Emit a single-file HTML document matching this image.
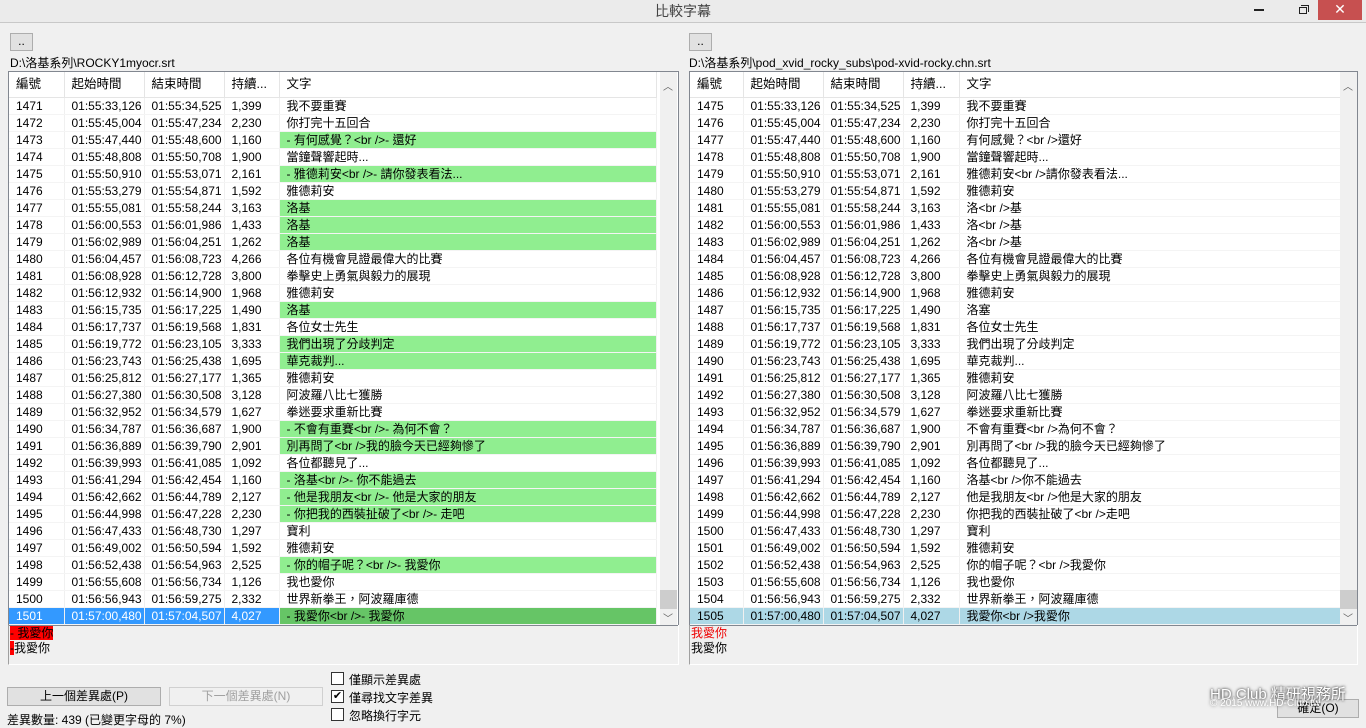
<!DOCTYPE html>
<html><head><meta charset="utf-8"><style>
*{margin:0;padding:0;box-sizing:border-box}
body{width:1366px;height:728px;background:#f0f0f0;font-family:"Liberation Sans","Noto Sans CJK TC",sans-serif;font-size:12px;color:#000;position:relative;overflow:hidden}
.abs{position:absolute}
.title{left:0;top:0;width:1366px;height:23px;background:#ebebeb;border-bottom:1px solid #c8c8c8;text-align:center;font-size:14px;line-height:22px;color:#444}
.close{left:1318px;top:0;width:44px;height:20px;background:#c75050;color:#fff;text-align:center;line-height:19px;font-size:14px}
.btn{background:#e1e1e1;border:1px solid #adadad;text-align:center}
.list{border:1px solid #828790;background:#fff;overflow:hidden}
table{border-collapse:collapse;table-layout:fixed;position:absolute;left:0;top:0}
td{height:17px;line-height:16px;padding-left:7px;white-space:nowrap;overflow:hidden;border-right:1px solid #f0f0f0;border-bottom:1px solid #f4f4f4}
tr.h td{height:25px;line-height:24px;border-right:1px solid #e5e5e5;border-bottom:1px solid #e5e5e5;font-size:12.5px}
td.g{background:#90ee90}
tr.sl td{background:#3399ff;color:#fff}
tr.sl td.g{background:#66c566;color:#000}
tr.sr td{background:#add8e6}
.sb{background:#f0f0f0;width:17px}
.cb{width:13px;height:13px;border:1px solid #333;background:#fff}
</style></head><body>
<div class="abs title">比較字幕</div>
<div class="abs" style="left:1254px;top:9px;width:10px;height:2px;background:#222"></div>
<div class="abs" style="left:1299px;top:7px;width:8px;height:7px;border:1px solid #222"></div>
<div class="abs" style="left:1301px;top:5px;width:8px;height:7px;border-top:1px solid #222;border-right:1px solid #222"></div>
<div class="abs close">✕</div>

<div class="abs btn" style="left:10px;top:33px;width:23px;height:18px;line-height:14px">..</div>
<div class="abs" style="left:10px;top:54px">D:\洛基系列\ROCKY1myocr.srt</div>
<div class="abs btn" style="left:689px;top:33px;width:23px;height:18px;line-height:14px">..</div>
<div class="abs" style="left:689px;top:54px">D:\洛基系列\pod_xvid_rocky_subs\pod-xvid-rocky.chn.srt</div>

<div class="abs list" style="left:8px;top:71px;width:671px;height:555px">
<table style="width:647px">
<colgroup><col style="width:55px"><col style="width:80px"><col style="width:80px"><col style="width:55px"><col style="width:377px"></colgroup>
<tr class="h"><td>編號</td><td>起始時間</td><td>結束時間</td><td>持續...</td><td>文字</td></tr>
<tr><td>1471</td><td>01:55:33,126</td><td>01:55:34,525</td><td>1,399</td><td>我不要重賽</td></tr>
<tr><td>1472</td><td>01:55:45,004</td><td>01:55:47,234</td><td>2,230</td><td>你打完十五回合</td></tr>
<tr><td>1473</td><td>01:55:47,440</td><td>01:55:48,600</td><td>1,160</td><td class="g">- 有何感覺？&lt;br /&gt;- 還好</td></tr>
<tr><td>1474</td><td>01:55:48,808</td><td>01:55:50,708</td><td>1,900</td><td>當鐘聲響起時...</td></tr>
<tr><td>1475</td><td>01:55:50,910</td><td>01:55:53,071</td><td>2,161</td><td class="g">- 雅德莉安&lt;br /&gt;- 請你發表看法...</td></tr>
<tr><td>1476</td><td>01:55:53,279</td><td>01:55:54,871</td><td>1,592</td><td>雅德莉安</td></tr>
<tr><td>1477</td><td>01:55:55,081</td><td>01:55:58,244</td><td>3,163</td><td class="g">洛基</td></tr>
<tr><td>1478</td><td>01:56:00,553</td><td>01:56:01,986</td><td>1,433</td><td class="g">洛基</td></tr>
<tr><td>1479</td><td>01:56:02,989</td><td>01:56:04,251</td><td>1,262</td><td class="g">洛基</td></tr>
<tr><td>1480</td><td>01:56:04,457</td><td>01:56:08,723</td><td>4,266</td><td>各位有機會見證最偉大的比賽</td></tr>
<tr><td>1481</td><td>01:56:08,928</td><td>01:56:12,728</td><td>3,800</td><td>拳擊史上勇氣與毅力的展現</td></tr>
<tr><td>1482</td><td>01:56:12,932</td><td>01:56:14,900</td><td>1,968</td><td>雅德莉安</td></tr>
<tr><td>1483</td><td>01:56:15,735</td><td>01:56:17,225</td><td>1,490</td><td class="g">洛基</td></tr>
<tr><td>1484</td><td>01:56:17,737</td><td>01:56:19,568</td><td>1,831</td><td>各位女士先生</td></tr>
<tr><td>1485</td><td>01:56:19,772</td><td>01:56:23,105</td><td>3,333</td><td class="g">我們出現了分歧判定</td></tr>
<tr><td>1486</td><td>01:56:23,743</td><td>01:56:25,438</td><td>1,695</td><td class="g">華克裁判...</td></tr>
<tr><td>1487</td><td>01:56:25,812</td><td>01:56:27,177</td><td>1,365</td><td>雅德莉安</td></tr>
<tr><td>1488</td><td>01:56:27,380</td><td>01:56:30,508</td><td>3,128</td><td>阿波羅八比七獲勝</td></tr>
<tr><td>1489</td><td>01:56:32,952</td><td>01:56:34,579</td><td>1,627</td><td>拳迷要求重新比賽</td></tr>
<tr><td>1490</td><td>01:56:34,787</td><td>01:56:36,687</td><td>1,900</td><td class="g">- 不會有重賽&lt;br /&gt;- 為何不會？</td></tr>
<tr><td>1491</td><td>01:56:36,889</td><td>01:56:39,790</td><td>2,901</td><td class="g">別再問了&lt;br /&gt;我的臉今天已經夠慘了</td></tr>
<tr><td>1492</td><td>01:56:39,993</td><td>01:56:41,085</td><td>1,092</td><td>各位都聽見了...</td></tr>
<tr><td>1493</td><td>01:56:41,294</td><td>01:56:42,454</td><td>1,160</td><td class="g">- 洛基&lt;br /&gt;- 你不能過去</td></tr>
<tr><td>1494</td><td>01:56:42,662</td><td>01:56:44,789</td><td>2,127</td><td class="g">- 他是我朋友&lt;br /&gt;- 他是大家的朋友</td></tr>
<tr><td>1495</td><td>01:56:44,998</td><td>01:56:47,228</td><td>2,230</td><td class="g">- 你把我的西裝扯破了&lt;br /&gt;- 走吧</td></tr>
<tr><td>1496</td><td>01:56:47,433</td><td>01:56:48,730</td><td>1,297</td><td>寶利</td></tr>
<tr><td>1497</td><td>01:56:49,002</td><td>01:56:50,594</td><td>1,592</td><td>雅德莉安</td></tr>
<tr><td>1498</td><td>01:56:52,438</td><td>01:56:54,963</td><td>2,525</td><td class="g">- 你的帽子呢？&lt;br /&gt;- 我愛你</td></tr>
<tr><td>1499</td><td>01:56:55,608</td><td>01:56:56,734</td><td>1,126</td><td>我也愛你</td></tr>
<tr><td>1500</td><td>01:56:56,943</td><td>01:56:59,275</td><td>2,332</td><td>世界新拳王，阿波羅庫德</td></tr>
<tr class="sl"><td>1501</td><td>01:57:00,480</td><td>01:57:04,507</td><td>4,027</td><td class="g">- 我愛你&lt;br /&gt;- 我愛你</td></tr>
</table>
<div class="abs sb" style="left:651px;top:0;height:553px"></div>
<div class="abs" style="left:654px;top:6px;font-size:10px;color:#606060">︿</div>
<div class="abs" style="left:651px;top:518px;width:17px;height:19px;background:#cdcdcd"></div>
<div class="abs" style="left:654px;top:538px;font-size:10px;color:#606060">﹀</div>
</div>

<div class="abs list" style="left:689px;top:71px;width:669px;height:555px">
<table style="width:650px">
<colgroup><col style="width:53px"><col style="width:80px"><col style="width:80px"><col style="width:56px"><col style="width:381px"></colgroup>
<tr class="h"><td>編號</td><td>起始時間</td><td>結束時間</td><td>持續...</td><td>文字</td></tr>
<tr><td>1475</td><td>01:55:33,126</td><td>01:55:34,525</td><td>1,399</td><td>我不要重賽</td></tr>
<tr><td>1476</td><td>01:55:45,004</td><td>01:55:47,234</td><td>2,230</td><td>你打完十五回合</td></tr>
<tr><td>1477</td><td>01:55:47,440</td><td>01:55:48,600</td><td>1,160</td><td>有何感覺？&lt;br /&gt;還好</td></tr>
<tr><td>1478</td><td>01:55:48,808</td><td>01:55:50,708</td><td>1,900</td><td>當鐘聲響起時...</td></tr>
<tr><td>1479</td><td>01:55:50,910</td><td>01:55:53,071</td><td>2,161</td><td>雅德莉安&lt;br /&gt;請你發表看法...</td></tr>
<tr><td>1480</td><td>01:55:53,279</td><td>01:55:54,871</td><td>1,592</td><td>雅德莉安</td></tr>
<tr><td>1481</td><td>01:55:55,081</td><td>01:55:58,244</td><td>3,163</td><td>洛&lt;br /&gt;基</td></tr>
<tr><td>1482</td><td>01:56:00,553</td><td>01:56:01,986</td><td>1,433</td><td>洛&lt;br /&gt;基</td></tr>
<tr><td>1483</td><td>01:56:02,989</td><td>01:56:04,251</td><td>1,262</td><td>洛&lt;br /&gt;基</td></tr>
<tr><td>1484</td><td>01:56:04,457</td><td>01:56:08,723</td><td>4,266</td><td>各位有機會見證最偉大的比賽</td></tr>
<tr><td>1485</td><td>01:56:08,928</td><td>01:56:12,728</td><td>3,800</td><td>拳擊史上勇氣與毅力的展現</td></tr>
<tr><td>1486</td><td>01:56:12,932</td><td>01:56:14,900</td><td>1,968</td><td>雅德莉安</td></tr>
<tr><td>1487</td><td>01:56:15,735</td><td>01:56:17,225</td><td>1,490</td><td>洛塞</td></tr>
<tr><td>1488</td><td>01:56:17,737</td><td>01:56:19,568</td><td>1,831</td><td>各位女士先生</td></tr>
<tr><td>1489</td><td>01:56:19,772</td><td>01:56:23,105</td><td>3,333</td><td>我們出現了分歧判定</td></tr>
<tr><td>1490</td><td>01:56:23,743</td><td>01:56:25,438</td><td>1,695</td><td>華克裁判...</td></tr>
<tr><td>1491</td><td>01:56:25,812</td><td>01:56:27,177</td><td>1,365</td><td>雅德莉安</td></tr>
<tr><td>1492</td><td>01:56:27,380</td><td>01:56:30,508</td><td>3,128</td><td>阿波羅八比七獲勝</td></tr>
<tr><td>1493</td><td>01:56:32,952</td><td>01:56:34,579</td><td>1,627</td><td>拳迷要求重新比賽</td></tr>
<tr><td>1494</td><td>01:56:34,787</td><td>01:56:36,687</td><td>1,900</td><td>不會有重賽&lt;br /&gt;為何不會？</td></tr>
<tr><td>1495</td><td>01:56:36,889</td><td>01:56:39,790</td><td>2,901</td><td>別再問了&lt;br /&gt;我的臉今天已經夠慘了</td></tr>
<tr><td>1496</td><td>01:56:39,993</td><td>01:56:41,085</td><td>1,092</td><td>各位都聽見了...</td></tr>
<tr><td>1497</td><td>01:56:41,294</td><td>01:56:42,454</td><td>1,160</td><td>洛基&lt;br /&gt;你不能過去</td></tr>
<tr><td>1498</td><td>01:56:42,662</td><td>01:56:44,789</td><td>2,127</td><td>他是我朋友&lt;br /&gt;他是大家的朋友</td></tr>
<tr><td>1499</td><td>01:56:44,998</td><td>01:56:47,228</td><td>2,230</td><td>你把我的西裝扯破了&lt;br /&gt;走吧</td></tr>
<tr><td>1500</td><td>01:56:47,433</td><td>01:56:48,730</td><td>1,297</td><td>寶利</td></tr>
<tr><td>1501</td><td>01:56:49,002</td><td>01:56:50,594</td><td>1,592</td><td>雅德莉安</td></tr>
<tr><td>1502</td><td>01:56:52,438</td><td>01:56:54,963</td><td>2,525</td><td>你的帽子呢？&lt;br /&gt;我愛你</td></tr>
<tr><td>1503</td><td>01:56:55,608</td><td>01:56:56,734</td><td>1,126</td><td>我也愛你</td></tr>
<tr><td>1504</td><td>01:56:56,943</td><td>01:56:59,275</td><td>2,332</td><td>世界新拳王，阿波羅庫德</td></tr>
<tr class="sr"><td>1505</td><td>01:57:00,480</td><td>01:57:04,507</td><td>4,027</td><td>我愛你&lt;br /&gt;我愛你</td></tr>
</table>
<div class="abs sb" style="left:650px;top:0;height:553px"></div>
<div class="abs" style="left:653px;top:6px;font-size:10px;color:#606060">︿</div>
<div class="abs" style="left:650px;top:518px;width:17px;height:19px;background:#cdcdcd"></div>
<div class="abs" style="left:653px;top:538px;font-size:10px;color:#606060">﹀</div>
</div>

<div class="abs" style="left:8px;top:625px;width:671px;height:40px;border-left:1px solid #a0a0a0;border-bottom:1px solid #fff;border-right:1px solid #fff"></div>
<div class="abs" style="left:10px;top:626px;line-height:15px"><span style="background:#f00">- 我愛你</span><br><span style="background:#f00">-</span>我愛你</div>
<div class="abs" style="left:689px;top:625px;width:669px;height:40px;border-left:1px solid #a0a0a0;border-bottom:1px solid #fff;border-right:1px solid #fff"></div>
<div class="abs" style="left:691px;top:626px;line-height:15px"><span style="color:#e00">我愛你</span><br>我愛你</div>

<div class="abs btn" style="left:7px;top:687px;width:154px;height:19px;line-height:17px">上一個差異處(P)</div>
<div class="abs btn" style="left:169px;top:687px;width:154px;height:19px;line-height:17px;color:#a0a0a0;background:#f0f0f0;border-color:#d0d0d0">下一個差異處(N)</div>
<div class="abs" style="left:7px;top:711px">差異數量: 439 (已變更字母的 7%)</div>
<div class="abs cb" style="left:331px;top:672px"></div>
<div class="abs" style="left:349px;top:671px">僅顯示差異處</div>
<div class="abs cb" style="left:331px;top:690px;font-size:11px;line-height:11px;text-align:center">✔</div>
<div class="abs" style="left:349px;top:689px">僅尋找文字差異</div>
<div class="abs cb" style="left:331px;top:708px"></div>
<div class="abs" style="left:349px;top:707px">忽略換行字元</div>

<div class="abs btn" style="left:1277px;top:699px;width:82px;height:19px;line-height:17px">確定(O)</div>
<div class="abs" style="left:1210px;top:683px;font-size:15px;color:#fff;text-shadow:0 0 3px #555,0 0 2px #555">HD.Club 精研視務所</div>
<div class="abs" style="left:1210px;top:698px;font-size:10px;color:#fff;text-shadow:0 0 3px #555">© 2015  www.HD-Club.tw</div>
</body></html>
